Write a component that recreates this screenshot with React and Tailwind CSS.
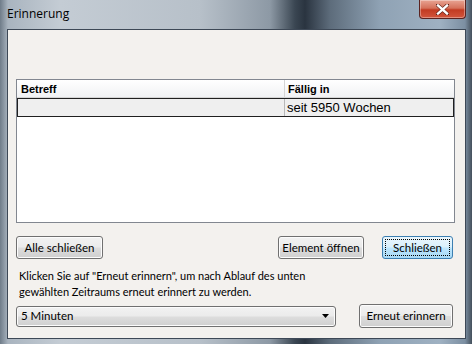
export default function App() {
  const btn =
    "flex items-center justify-center whitespace-nowrap rounded-[3px] border border-[#707070] bg-[linear-gradient(#f2f2f2_0%,#ebebeb_48%,#dddddd_52%,#cfcfcf_100%)] shadow-[inset_0_0_0_1px_#fcfcfc] text-[11.5px] text-black";
  return (
    <div
      className="relative w-[472px] h-[344px] overflow-hidden flex flex-col bg-[linear-gradient(90deg,#6f7c89_0px,#a9b4bf_8px,#c4ccd4_60px,#b7c0c9_200px,#8d99a5_270px,#3a4652_295px,#2a3440_305px,#5d6c7b_330px,#8fa2b4_380px,#9fb1c2_440px,#7c8fa2_465px,#44505c_472px)]"
      style={{ fontFamily: 'Lato, "Open Sans", sans-serif' }}
    >
      {/* title bar */}
      <div className="h-[29px] flex items-start relative">
        <div className="pl-[7px] pt-[6px] text-[12px] text-black leading-[16px]" style={{ fontFamily: '"Open Sans", sans-serif' }}>Erinnerung</div>
        <div className="absolute left-[419px] top-0 w-[47px] h-[19px] rounded-b-[4px] border border-t-0 border-[#5b2320] bg-[linear-gradient(#e8a493_0%,#d5715a_45%,#c23b22_55%,#d2553c_100%)] shadow-[inset_0_0_0_1px_rgba(255,255,255,0.35)] flex items-center justify-center">
          <svg width="13" height="11" viewBox="0 0 13 11">
            <path d="M1.5 1 L11.5 10 M11.5 1 L1.5 10" stroke="#5a1a10" strokeWidth="3.6" strokeLinecap="square" />
            <path d="M2 1.5 L11 9.5 M11 1.5 L2 9.5" stroke="#ffffff" strokeWidth="2.4" strokeLinecap="square" />
          </svg>
        </div>
      </div>
      {/* client area */}
      <div className="ml-[7px] mr-[6px] h-[310px] border border-[#3d4856] bg-[#f3f1ee] flex flex-col pl-[8px] pr-[10px]">
        {/* list */}
        <div className="mt-[49px] h-[144px] border border-[#828790] bg-white flex flex-col">
          <div className="h-[18px] flex bg-[linear-gradient(#ffffff,#f1f2f4)] border-b border-[#d5d5d5] text-[11px] font-bold text-black leading-[18px]" style={{ fontFamily: '"Liberation Sans", Arial, sans-serif' }}>
            <div className="w-[268px] pl-[4px] border-r border-[#d5d5d5]">Betreff</div>
            <div className="pl-[3px]">Fällig in</div>
          </div>
          <div className="h-[19px] flex bg-[#efefef] border border-[#202020] text-[13px] text-black leading-[17px]" style={{ fontFamily: '"Liberation Sans", Arial, sans-serif' }}>
            <div className="w-[267px] border-r border-[#b8b8b8]"></div>
            <div className="pl-[2px]">seit 5950 Wochen</div>
          </div>
        </div>
        {/* button row */}
        <div className="mt-[13px] h-[23px] flex">
          <div className={btn + " w-[87px]"}>Alle schließen</div>
          <div className="flex-1"></div>
          <div className={btn + " w-[86px]"}>Element öffnen</div>
          <div className="w-[18px]"></div>
          <div className="w-[71px] flex items-center justify-center rounded-[3px] border border-[#3c7fb1] bg-[linear-gradient(#eaf6fd_0%,#d9f0fc_48%,#bee6fd_52%,#a7d9f5_100%)] p-[2px] text-[11.5px] text-black">
            <div className="w-full h-full border border-dotted border-black flex items-center justify-center">Schließen</div>
          </div>
          <div className="w-[2px]"></div>
        </div>
        {/* text */}
        <div className="mt-[9px] pl-[3px] text-[11px] leading-[16px] text-black">
          Klicken Sie auf "Erneut erinnern", um nach Ablauf des unten
          <br />
          gewählten Zeitraums erneut erinnert zu werden.
        </div>
        {/* combo row */}
        <div className="mt-[4px] h-[24px] flex items-center">
          <div className="w-[320px] h-[21px] rounded-[3px] border border-[#707070] bg-[linear-gradient(#f2f2f2_0%,#ebebeb_48%,#dddddd_52%,#cfcfcf_100%)] shadow-[inset_0_0_0_1px_#fcfcfc] flex items-center pl-[4px] pr-[6px] text-[11.5px] text-black">
            <span className="flex-1">5 Minuten</span>
            <svg width="7" height="4" viewBox="0 0 7 4">
              <path d="M0 0 H7 L3.5 4 Z" fill="#000" />
            </svg>
          </div>
          <div className="flex-1"></div>
          <div className={btn + " w-[94px] h-[24px]"}>Erneut erinnern</div>
          <div className="w-[2px]"></div>
        </div>
      </div>
    </div>
  );
}
